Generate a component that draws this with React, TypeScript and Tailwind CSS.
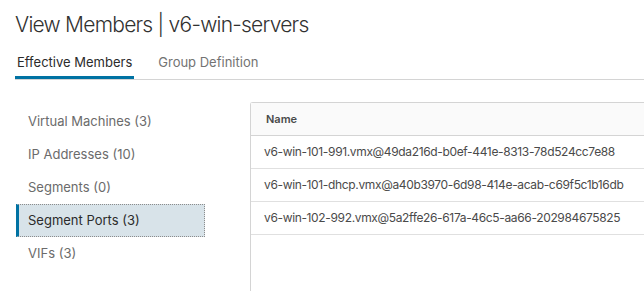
const navItems = [
  { label: "Virtual Machines (3)" },
  { label: "IP Addresses (10)" },
  { label: "Segments (0)" },
  { label: "Segment Ports (3)", active: true },
  { label: "VIFs (3)" },
]

const rows = [
  "v6-win-101-991.vmx@49da216d-b0ef-441e-8313-78d524cc7e88",
  "v6-win-101-dhcp.vmx@a40b3970-6d98-414e-acab-c69f5c1b16db",
  "v6-win-102-992.vmx@5a2ffe26-617a-46c5-aa66-202984675825",
]

export default function App() {
  return (
    <div className="h-[291px] w-[644px] overflow-hidden bg-white font-['Inter',sans-serif] text-[#333]">
      <h1 className="pl-[15px] pt-[11px] text-[21px] leading-[28px] font-light tracking-[-0.75px] text-[#313131]">
        View Members | v6-win-servers
      </h1>

      <div className="mt-[14px] ml-[15px] flex border-b border-[#d4d4d4] text-[13px]">
        <div className="border-b-[3px] border-[#0072a3] px-[2px] pb-[5px] leading-[18px] text-[#2b2b2b]">
          Effective Members
        </div>
        <div className="ml-[22px] px-[2px] pb-[5px] leading-[18px] text-[#737373]">
          Group Definition
        </div>
      </div>

      <div className="mt-[22px] flex">
        <div className="ml-[16px] flex w-[189px] shrink-0 flex-col pt-[3px] text-[13px]">
          {navItems.map((item) =>
            item.active ? (
              <div
                key={item.label}
                className="flex h-[33px] items-center border border-dotted border-[#8c8c8c] border-l-[3px] border-l-[#0072a3] [border-left-style:solid] bg-[#d8e3e9] pl-[9px] text-[#2b2b2b]"
              >
                {item.label}
              </div>
            ) : (
              <div key={item.label} className="flex h-[33px] items-center pl-[12px] text-[#6b6b6b]">
                {item.label}
              </div>
            )
          )}
        </div>

        <div className="ml-[45px] min-w-0 flex-1 rounded-tl-[3px] border-t border-l border-[#d4d4d4]">
          <div className="flex h-[33px] items-center border-b border-[#d4d4d4] bg-[#fafafa] pl-[15px] text-[11px] font-semibold text-[#4a4a4a]">
            Name
          </div>
          {rows.map((r) => (
            <div
              key={r}
              className="flex h-[33px] items-center border-b border-[#e0e0e0] pl-[13px] text-[12px] tracking-[-0.35px] whitespace-nowrap text-[#4a4a4a]"
            >
              {r}
            </div>
          ))}
          <div className="h-[60px]" />
        </div>
      </div>
    </div>
  )
}
